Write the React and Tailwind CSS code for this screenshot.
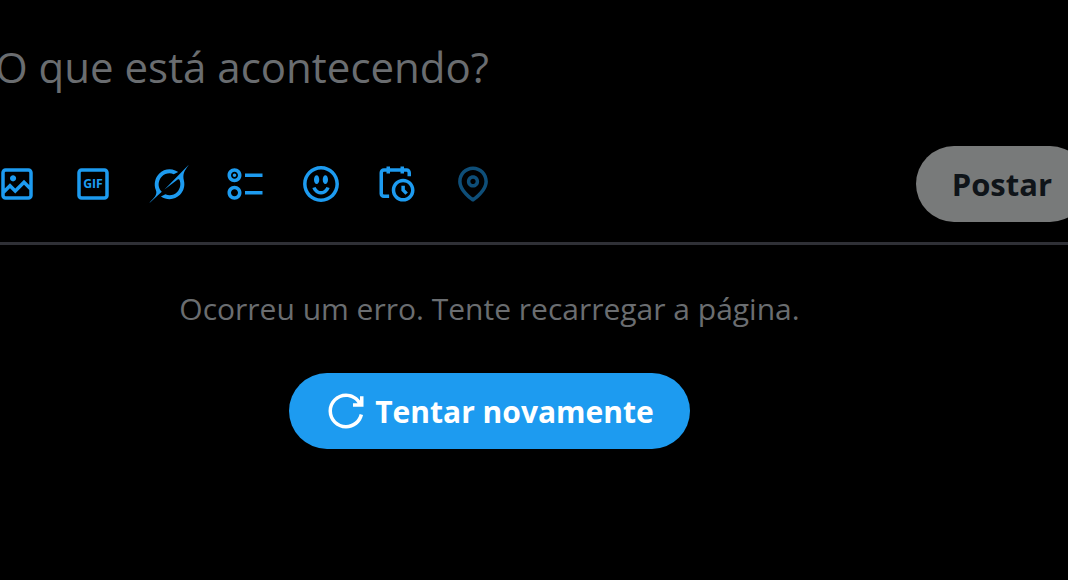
import React from "react";

const ICONS = {
  media:
    "M3 5.5C3 4.119 4.119 3 5.5 3h13C19.881 3 21 4.119 21 5.5v13c0 1.381-1.119 2.5-2.5 2.5h-13C4.119 21 3 19.881 3 18.5v-13zM5.5 5c-.276 0-.5.224-.5.5v9.086l3-3 3 3 5-5 3 3V5.5c0-.276-.224-.5-.5-.5h-13zM19 15.414l-3-3-5 5-3-3-3 3V18.5c0 .276.224.5.5.5h13c.276 0 .5-.224.5-.5v-3.086zM9.75 7C8.784 7 8 7.784 8 8.75s.784 1.75 1.75 1.75 1.75-.784 1.75-1.75S10.716 7 9.75 7z",
  frame:
    "M3 5.5C3 4.119 4.12 3 5.5 3h13C19.88 3 21 4.119 21 5.5v13c0 1.381-1.12 2.5-2.5 2.5h-13C4.12 21 3 19.881 3 18.5v-13zM5.5 5c-.28 0-.5.224-.5.5v13c0 .276.22.5.5.5h13c.28 0 .5-.224.5-.5v-13c0-.276-.22-.5-.5-.5h-13z",
  grok: "M12.745 20.54l10.97-8.19c.539-.4 1.307-.244 1.564.38 1.349 3.288.746 7.241-1.938 9.955-2.683 2.714-6.417 3.31-9.83 1.954l-3.728 1.745c5.347 3.697 11.84 2.782 15.898-1.324 3.219-3.255 4.216-7.692 3.284-11.693l.008.009c-1.351-5.878.332-8.227 3.782-13.031L33 0l-4.54 4.59v-.014L12.743 20.544m-2.263 1.987c-3.837-3.707-3.175-9.446.1-12.755 2.42-2.449 6.388-3.448 9.852-1.979l3.72-1.737c-.67-.49-1.53-1.017-2.515-1.387-4.455-1.854-9.789-.931-13.41 2.728-3.483 3.523-4.579 8.94-2.697 13.561 1.405 3.454-.899 5.898-3.22 8.364C1.49 30.2.666 31.074 0 32l10.478-9.466",
  poll: "M6 5c-1.1 0-2 .895-2 2s.9 2 2 2 2-.895 2-2-.9-2-2-2zM2 7c0-2.209 1.79-4 4-4s4 1.791 4 4-1.79 4-4 4-4-1.791-4-4zm20 1H12V6h10v2zM6 15c-1.1 0-2 .895-2 2s.9 2 2 2 2-.895 2-2-.9-2-2-2zm-4 2c0-2.209 1.79-4 4-4s4 1.791 4 4-1.79 4-4 4-4-1.791-4-4zm20 1H12v-2h10v2zM7 7c0 .552-.45 1-1 1s-1-.448-1-1 .45-1 1-1 1 .448 1 1z",
  emoji:
    "M8 9.5C8 8.119 8.672 7 9.5 7S11 8.119 11 9.5 10.328 12 9.5 12 8 10.881 8 9.5zm6.5 2.5c.828 0 1.5-1.119 1.5-2.5S15.328 7 14.5 7 13 8.119 13 9.5s.672 2.5 1.5 2.5zM12 16c-2.224 0-3.021-2.227-3.051-2.316l-1.897.633c.05.15 1.271 3.684 4.949 3.684s4.898-3.533 4.949-3.684l-1.896-.638c-.033.095-.83 2.322-3.053 2.322zm10.25-4.001c0 5.652-4.598 10.25-10.25 10.25S1.75 17.652 1.75 12 6.348 1.75 12 1.75 22.25 6.348 22.25 12zm-2 0c0-4.549-3.701-8.25-8.25-8.25S3.75 7.451 3.75 12s3.701 8.25 8.25 8.25 8.25-3.701 8.25-8.25z",
  schedule:
    "M6 3V2h2v1h6V2h2v1h1.5C18.88 3 20 4.119 20 5.5v2h-2v-2c0-.276-.22-.5-.5-.5H16v1h-2V5H8v1H6V5H4.5c-.28 0-.5.224-.5.5v12c0 .276.22.5.5.5h3v2h-3C3.12 20 2 18.881 2 17.5v-12C2 4.119 3.12 3 4.5 3H6zm9.5 8c-2.49 0-4.5 2.015-4.5 4.5s2.01 4.5 4.5 4.5 4.5-2.015 4.5-4.5-2.01-4.5-4.5-4.5zM9 15.5C9 11.91 11.91 9 15.5 9s6.5 2.91 6.5 6.5-2.91 6.5-6.5 6.5S9 19.09 9 15.5zm5.5-2.5h2v2.086l1.71 1.707-1.42 1.414-2.29-2.293V13z",
  location:
    "M12 7c-1.93 0-3.5 1.57-3.5 3.5S10.07 14 12 14s3.5-1.57 3.5-3.5S13.93 7 12 7zm0 5c-.827 0-1.5-.673-1.5-1.5S11.173 9 12 9s1.5.673 1.5 1.5S12.827 12 12 12zm0-10c-4.687 0-8.5 3.813-8.5 8.5 0 5.967 7.621 11.116 7.945 11.332l.555.37.555-.37c.324-.216 7.945-5.365 7.945-11.332C20.5 5.813 16.687 2 12 2zm0 17.77c-1.665-1.241-6.5-5.196-6.5-9.27C5.5 6.916 8.416 4 12 4s6.5 2.916 6.5 6.5c0 4.073-4.835 8.028-6.5 9.27z",
  retry:
    "M12 4c-4.418 0-8 3.58-8 8s3.582 8 8 8c3.806 0 6.993-2.66 7.802-6.22l1.95.44C20.742 18.67 16.76 22 12 22 6.477 22 2 17.52 2 12S6.477 2 12 2c3.272 0 6.176 1.57 8 4V3.5h2v6h-6v-2h2.616C17.175 5.39 14.749 4 12 4z",
};

function Icon({ path, viewBox = "0 0 24 24", children }) {
  return (
    <svg
      viewBox={viewBox}
      className="size-[42px] shrink-0 fill-current"
      aria-hidden="true"
    >
      <path d={path} />
      {children}
    </svg>
  );
}

const tools = [
  { label: "Mídia", path: ICONS.media },
  { label: "GIF", path: ICONS.frame, text: "GIF" },
  { label: "Grok", path: ICONS.grok, viewBox: "-1 -1 35 34" },
  { label: "Enquete", path: ICONS.poll },
  { label: "Emoji", path: ICONS.emoji },
  { label: "Programar", path: ICONS.schedule },
  { label: "Localização", path: ICONS.location, disabled: true },
];

function Toolbar() {
  return (
    <div className="flex items-center text-[#1d9bf0]">
      {tools.map((tool) => (
        <button
          key={tool.label}
          type="button"
          aria-label={tool.label}
          disabled={tool.disabled}
          className="flex size-[76px] items-center justify-center rounded-full disabled:opacity-50"
        >
          <Icon path={tool.path} viewBox={tool.viewBox}>
            {tool.text && (
              <text
                x="12"
                y="14.5"
                textAnchor="middle"
                className="text-[7px] font-bold"
              >
                {tool.text}
              </text>
            )}
          </Icon>
        </button>
      ))}
    </div>
  );
}

function Composer() {
  return (
    <form
      className="-mr-5 -ml-[21px] pt-[34px]"
      onSubmit={(e) => e.preventDefault()}
    >
      <input
        type="text"
        aria-label="O que está acontecendo?"
        placeholder="O que está acontecendo?"
        className="block h-16 w-full bg-transparent pl-4 text-[42px] text-[#e7e9ea] outline-none placeholder:text-[#6a6d70]"
      />
      <div className="mt-12 flex items-center justify-between">
        <Toolbar />
        <button
          type="submit"
          disabled
          className="h-[76px] rounded-full bg-[#787a7a] px-9 text-[31px] font-bold text-[#0f1419]"
        >
          Postar
        </button>
      </div>
    </form>
  );
}

function LoadError() {
  return (
    <section className="mr-[89px] flex flex-col items-center gap-10 pt-10">
      <p className="text-[30px] leading-[48px] text-[#6a6d70]">
        Ocorreu um erro. Tente recarregar a página.
      </p>
      <button
        type="button"
        className="flex h-[76px] items-center gap-2 rounded-full bg-[#1d9bf0] px-9 text-[30px] font-bold text-white"
      >
        <Icon path={ICONS.retry} />
        Tentar novamente
      </button>
    </section>
  );
}

export default function App() {
  return (
    <main className="min-h-screen overflow-hidden bg-black font-['Open_Sans',sans-serif]">
      <Composer />
      <hr className="mt-5 border-t-3 border-[#2f3036]" />
      <LoadError />
    </main>
  );
}
